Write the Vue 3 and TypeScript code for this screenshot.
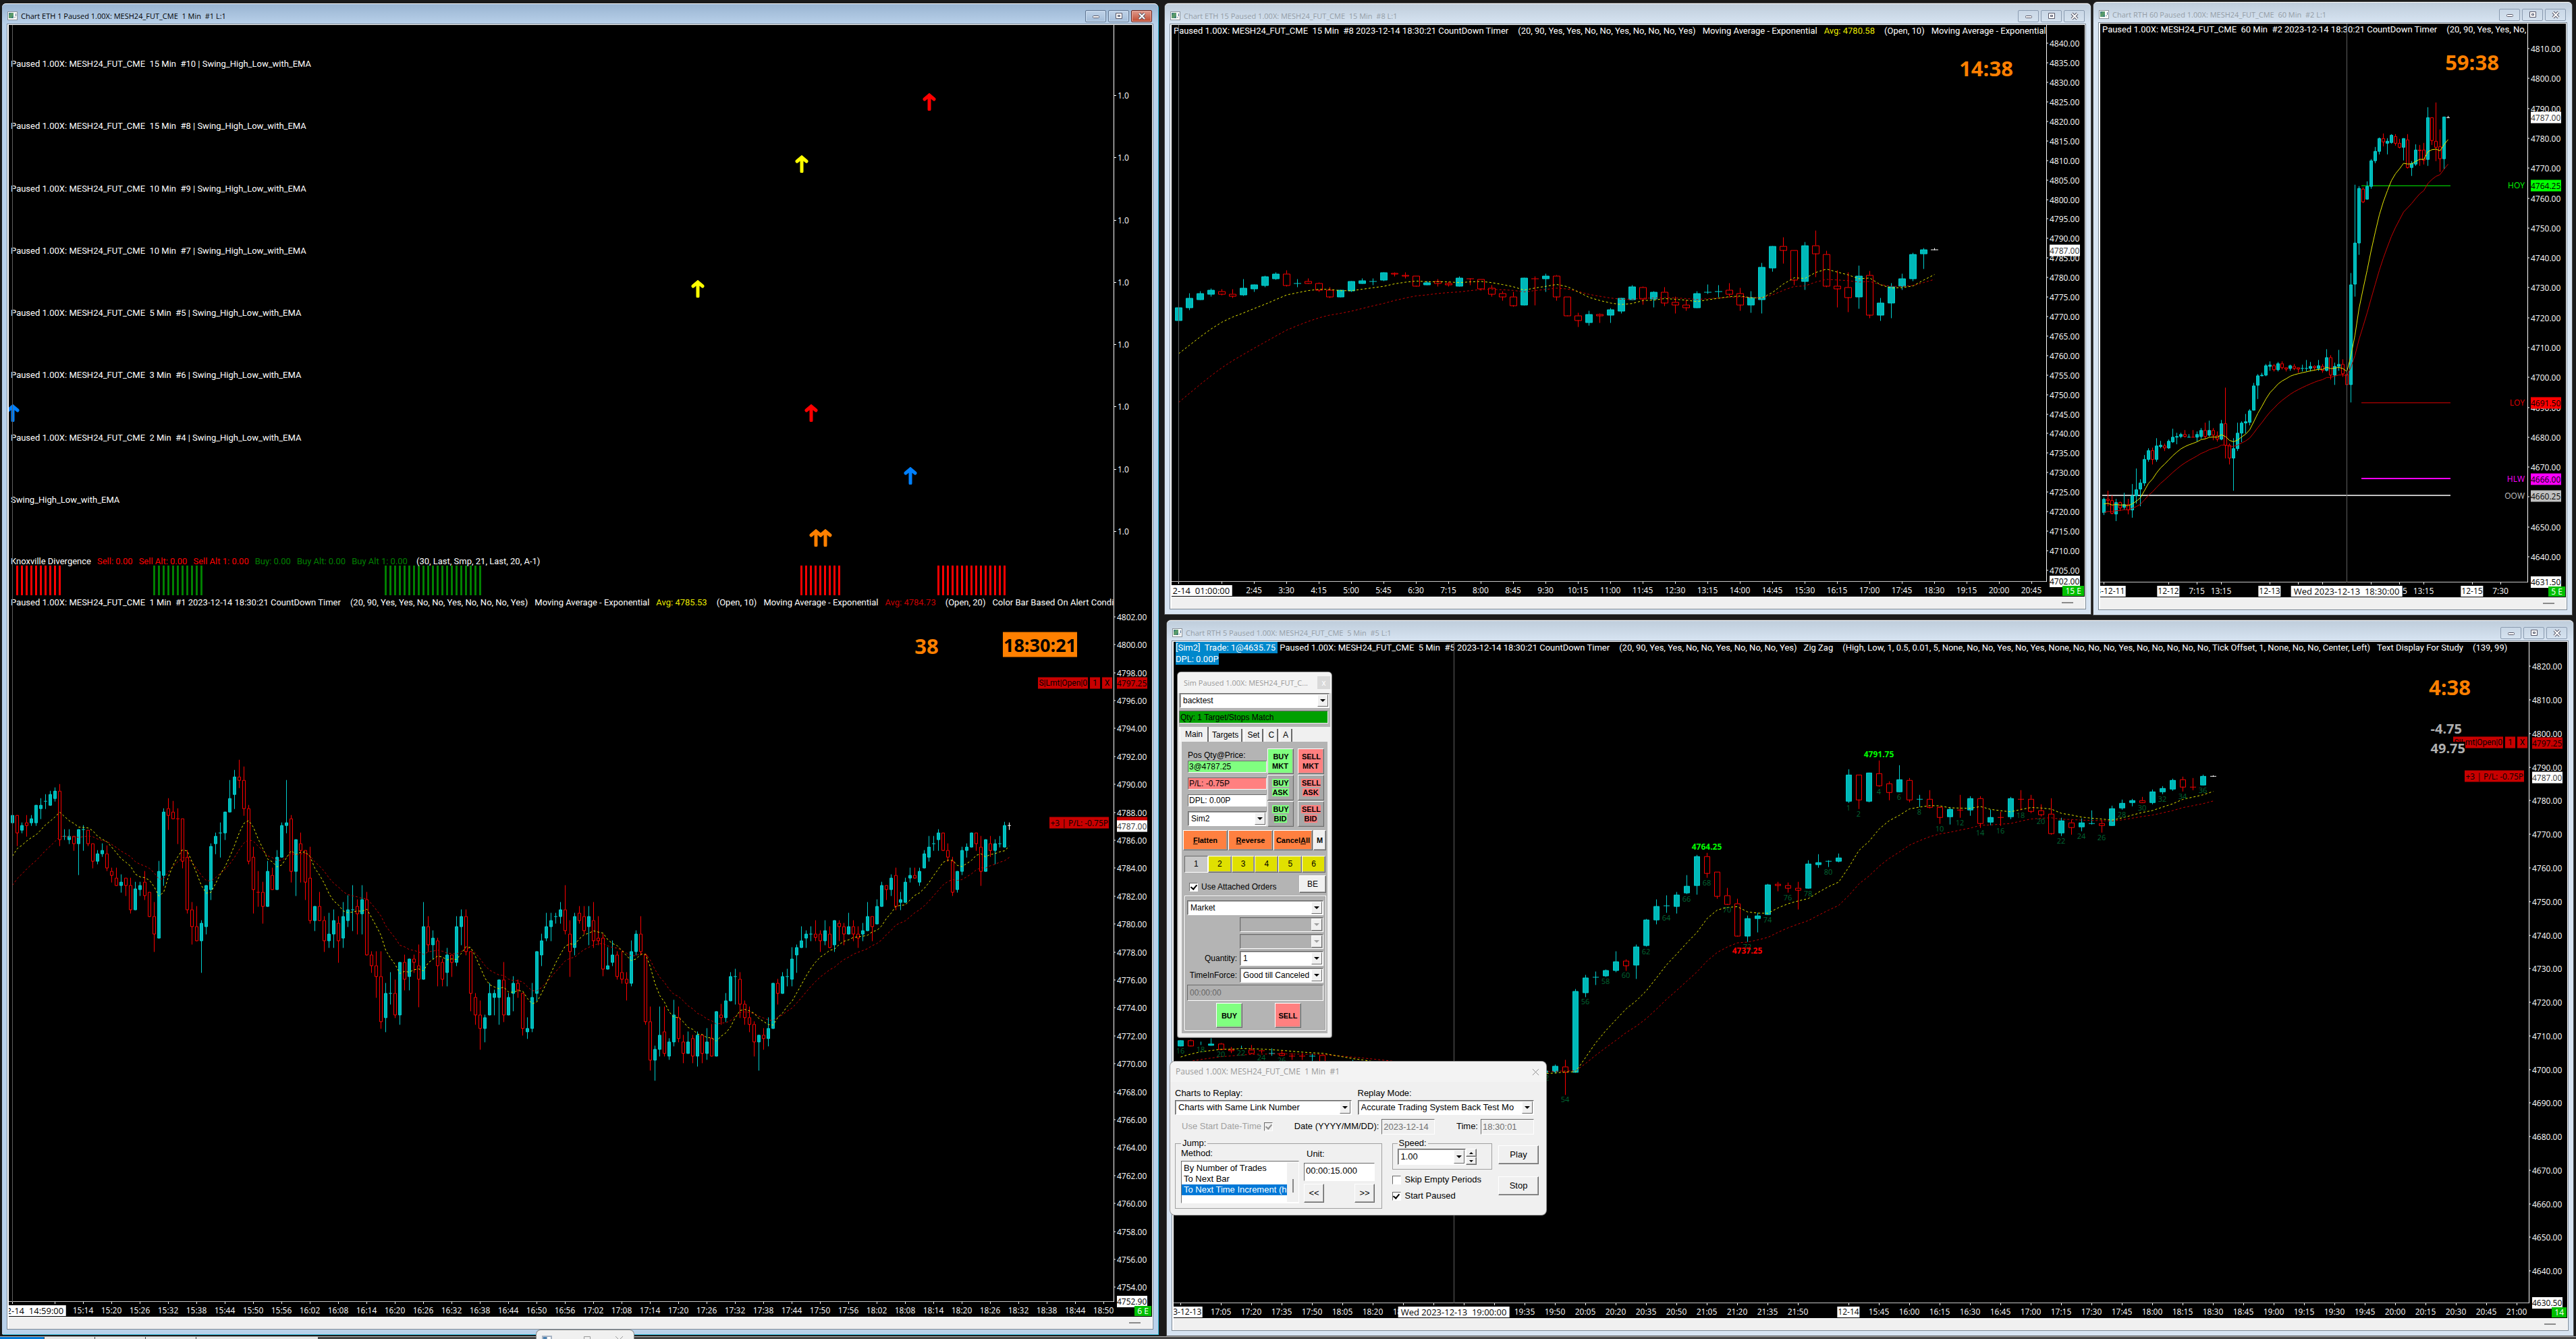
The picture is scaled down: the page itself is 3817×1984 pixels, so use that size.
<script setup lang="ts">
type Dir = 'u' | 'd' | 'w'
interface Candle { dir: Dir; hi: number; top: number; bot: number; lo: number }
interface Mark { text: string; cls: string; left: string; top: string }
interface PriceBox { text: string; price: number; cls: string }
interface TimeLabel { i: number; text: string; boxed?: boolean; long?: boolean }
interface Chart {
  id: string; title: string; active: boolean; badge: string
  w: number; h: number; x0: number; step: number; half: number
  unit: number; base: number
  refPrice: number; refY: number; perPoint: number
  prices: { from: number; to: number; by: number }
  floor: string; boxes: PriceBox[]
  candles: Candle[]; ema: { source: 'open' | 'close'; yellow: number; red: number; dash: boolean }
  ticks: number[]; times: TimeLabel[]
  cursor: number; header: { text: string; cls?: string }[]
}

// dir high top bottom low, one bar per "|"
const parse = (s: string): Candle[] => s.trim().split('|').map(r => {
  const [dir, hi, top, bot, lo] = r.trim().split(' ')
  return { dir: dir as Dir, hi: +hi, top: +top, bot: +bot, lo: +lo }
})

const oneMinute = parse(`u 425 425 440 455|d 425 425 463 491|u 440 447 457 463|d 425 440 447 470|u 425 432 440 447|u 402 402 440 447|u 387 402 410 432|u 379 394 394 410|u 371 379 402 402|u 364 371 387 393|
d 356 371 478 491|u 455 470 470 478|u 455 470 478 486|d 470 470 486 501|u 455 455 486 554|u 447 456 456 501|d 457 457 486 491|d 486 486 524 539|u 501 508 524 530|u 486 501 508 515|
d 491 508 539 546|d 539 547 555 570|d 539 562 577 577|u 554 570 577 592|d 562 562 577 600|d 562 577 631 638|u 570 585 631 631|u 570 577 586 600|d 547 570 600 608|d 592 592 646 646|
d 615 646 684 722|u 524 547 692 692|u 410 417 555 577|d 387 410 425 455|d 393 417 432 432|d 410 432 432 486|d 432 432 524 539|d 501 516 631 638|d 615 631 668 706|d 623 668 699 699|
u 654 660 699 768|u 577 577 668 684|u 486 492 586 608|u 463 470 486 508|u 440 463 463 516|u 417 417 463 478|u 348 387 417 417|u 326 341 379 410|d 303 341 348 364|d 318 348 410 425|
d 402 410 524 531|d 493 516 586 638|d 547 592 592 623|d 570 592 623 660|u 524 547 623 623|d 539 555 586 586|u 501 516 586 586|u 440 447 516 516|u 348 440 447 463|d 425 432 547 570|
u 478 478 547 600|d 463 486 501 570|d 501 501 570 608|d 493 562 654 660|u 623 623 654 677|d 592 623 654 654|d 646 654 699 722|u 638 684 699 713|u 631 654 684 713|d 646 660 699 745|
u 615 646 692 713|u 600 631 654 668|u 577 631 631 677|d 608 623 639 684|u 577 608 639 684|d 592 608 730 730|d 722 730 753 768|d 722 753 776 822|d 722 776 875 890|u 791 814 867 897|
u 768 814 814 837|d 784 814 860 866|u 745 745 860 881|d 730 745 783 806|u 738 738 776 806|d 730 738 745 768|d 707 753 783 843|u 615 668 783 783|d 646 668 707 722|u 677 692 707 738|
d 692 699 753 797|d 738 745 783 797|u 715 730 768 797|d 730 730 745 776|u 646 668 745 753|u 631 646 668 707|d 631 646 722 730|d 722 722 814 852|d 814 822 860 881|d 829 860 890 936|
u 860 867 890 920|u 791 814 860 860|u 806 814 822 860|u 784 784 822 881|d 745 784 860 875|u 814 822 860 860|u 776 791 814 852|d 784 791 806 822|d 814 814 890 905|u 867 890 898 912|
u 791 822 890 897|u 722 722 814 829|u 684 699 730 753|u 638 668 692 699|u 638 654 668 699|u 638 646 646 660|u 615 631 646 660|d 577 631 677 684|d 654 684 722 776|u 638 646 714 730|
d 623 638 654 660|d 623 646 677 684|u 623 646 668 707|d 615 654 699 713|d 646 692 699 707|d 684 692 760 775|u 713 753 761 761|u 699 730 745 753|d 722 730 776 783|d 722 768 783 791|
d 768 783 791 828|u 699 722 791 797|u 677 684 722 730|d 646 684 722 730|d 730 730 875 881|d 843 875 959 981|u 928 936 959 1004|u 843 905 936 951|d 843 898 944 951|u 912 920 951 958|
u 828 860 920 928|d 843 867 912 920|d 905 920 944 965|u 897 920 944 944|d 905 912 951 965|u 897 905 951 973|d 905 905 944 965|u 890 920 944 958|d 882 912 951 951|u 853 853 951 951|
d 837 860 867 881|u 814 829 867 875|u 768 776 829 829|u 760 776 776 837|d 768 783 837 867|d 829 837 867 881|d 843 867 882 897|d 875 882 920 951|u 905 905 920 981|d 890 905 912 936|
u 867 890 912 928|u 791 791 890 890|d 783 791 814 837|u 768 776 814 814|u 760 776 776 797|u 713 738 783 797|u 707 713 730 768|u 668 699 714 714|u 677 684 692 713|u 668 684 684 699|
d 654 684 691 699|d 677 684 699 722|u 654 677 699 707|d 668 684 714 714|u 654 654 707 722|d 654 660 668 699|d 660 668 684 707|u 638 668 684 684|d 654 668 684 699|d 668 684 692 713|
u 660 677 684 699|u 615 646 677 677|d 646 646 668 699|u 608 623 661 661|u 570 577 623 623|d 577 577 586 608|u 554 562 586 600|d 539 555 623 631|u 592 608 615 631|u 562 570 615 615|
u 539 555 562 570|d 539 555 562 562|u 539 547 570 577|u 501 508 540 540|u 470 493 516 524|u 470 486 486 501|u 455 463 478 501|d 463 463 501 501|d 486 501 516 524|d 516 524 592 600|
u 547 547 586 592|u 493 501 547 554|u 486 493 501 516|u 463 463 493 493|d 463 463 486 501|d 470 493 547 577|u 478 478 547 547|d 470 486 501 515|u 478 486 501 531|u 470 486 486 493|
u 439 447 493 493|w 440 447 447 455`)

const fifteenMinute = parse(`u 794 794 827 827|u 758 770 794 800|u 753 758 773 773|u 746 749 759 764|d 747 753 759 762|d 747 760 764 769|u 721 744 761 763|u 735 735 745 753|u 713 714 737 740|u 703 708 720 721|
d 699 708 737 739|u 721 731 731 740|d 720 727 731 731|d 730 732 750 752|d 742 749 766 769|u 749 749 766 766|u 727 727 751 752|u 720 725 731 731|u 720 726 726 735|u 704 704 723 725|
d 704 705 708 713|d 704 710 713 718|d 713 713 738 738|u 726 730 736 736|d 721 727 732 739|d 728 732 736 738|u 714 718 738 738|d 720 720 720 735|d 721 722 745 750|d 737 744 759 765|
d 753 758 767 776|d 754 767 790 791|u 718 718 788 788|d 714 720 720 788|u 707 713 720 753|d 710 713 766 776|d 767 767 816 816|d 808 816 828 843|u 803 811 832 839|d 810 812 816 832|
u 797 800 813 832|u 770 770 804 808|u 737 740 773 773|d 740 742 771 786|u 753 754 771 793|d 742 754 783 789|d 766 781 788 809|d 776 787 795 802|u 753 758 795 795|u 735 754 754 758|
u 737 753 753 766|d 732 749 760 764|d 744 758 788 802|u 753 769 788 807|u 679 690 773 809|u 636 636 692 701|d 613 636 647 679|d 646 646 723 735|u 625 634 726 748|d 596 634 655 714|
d 648 657 738 740|d 699 738 745 793|d 704 742 768 805|u 686 713 766 797|d 700 710 814 821|u 770 782 814 827|u 732 740 783 821|u 708 720 738 748|u 653 657 720 725|u 641 645 655 694|
w 641 645 645 645`)

const sixtyMinute = parse(`u 1258 1261 1295 1300|d 1240 1261 1265 1278|d 1253 1265 1297 1298|u 1262 1269 1298 1316|d 1268 1270 1283 1290|u 1246 1274 1282 1287|d 1261 1274 1289 1298|u 1224 1252 1289 1307|u 1184 1237 1252 1272|u 1211 1220 1235 1278|
u 1150 1160 1221 1227|u 1133 1139 1161 1166|d 1132 1139 1161 1172|u 1107 1126 1161 1166|u 1115 1125 1129 1131|d 1122 1127 1131 1139|u 1112 1115 1131 1134|u 1084 1104 1116 1118|u 1095 1103 1105 1122|u 1095 1098 1102 1106|
d 1087 1097 1103 1105|u 1097 1104 1104 1104|d 1088 1105 1105 1105|u 1091 1098 1104 1115|u 1082 1087 1102 1107|d 1069 1087 1102 1107|u 1064 1088 1100 1102|d 1083 1088 1100 1112|d 1090 1101 1109 1115|u 1062 1070 1109 1111|
d 980 1071 1124 1158|d 1122 1124 1157 1173|u 1108 1133 1157 1239|u 1069 1094 1133 1138|u 1066 1069 1094 1116|u 1047 1065 1069 1095|u 1035 1038 1067 1074|u 968 975 1037 1037|u 946 950 974 1007|u 942 948 950 950|
u 921 924 948 950|u 914 922 926 935|d 920 924 934 938|u 915 919 934 938|d 914 919 929 932|d 928 929 932 937|u 922 923 931 936|d 920 925 930 934|d 928 929 933 941|u 922 931 931 937|
u 910 930 930 938|u 915 926 930 937|d 923 925 928 935|u 910 924 931 935|d 921 926 935 940|u 882 904 935 938|d 899 904 948 957|u 917 925 948 971|u 885 920 926 935|d 909 920 945 951|
d 935 946 972 976|u 690 720 972 1016|u 467 614 718 749|u 470 476 614 643|d 474 478 510 512|u 458 470 503 503|u 403 406 471 476|u 372 381 405 411|u 347 349 381 388|d 337 349 358 368|
u 350 357 361 388|u 340 341 360 361|d 340 344 361 366|d 351 362 371 374|u 349 350 371 404|d 340 352 423 424|u 408 412 423 443|u 365 379 414 418|d 366 378 380 418|d 362 378 404 414|
u 271 297 403 418|d 297 297 354 364|d 259 356 371 405|d 327 369 400 433|u 294 295 400 426|w 293 296 296 296`)

const fiveMinute = parse(`u 922 922 934 934|d 921 923 935 935|u 926 926 926 932|u 919 930 933 933|d 928 930 941 941|d 938 941 944 949|u 934 934 934 939|d 933 943 950 950|d 945 945 945 949|u 940 950 950 955|
d 944 950 955 955|d 950 956 956 964|d 950 956 956 964|u 952 957 957 966|d 955 955 968 968|d 970 972 980 984|d 972 976 984 988|u 965 974 980 984|d 974 978 986 990|d 978 984 990 994|
d 980 988 996 999|d 986 992 998 999|u 990 994 999 1000|d 990 994 999 1002|u 990 995 999 1002|d 990 996 1000 1004|u 992 996 1000 1004|d 992 997 1001 1004|u 994 996 1001 1004|d 992 996 1000 1004|
u 990 995 1000 1002|d 990 995 999 1002|u 990 994 999 1002|d 988 993 998 1000|u 988 992 998 999|u 986 990 994 998|
u 985 988 991 993|u 975 978 990 993|d 965 979 991 1040|u 812 816 991 991|
u 781 787 819 828|u 774 786 786 802|u 769 771 783 784|u 730 752 771 774|d 748 750 760 771|u 715 720 759 788|u 660 661 717 718|u 618 632 662 670|u 609 631 631 645|u 602 607 632 647|
u 565 588 603 604|u 521 524 587 606|d 517 524 560 569|d 558 558 610 615|d 593 609 628 628|d 616 626 696 696|u 653 658 696 708|u 647 653 659 688|u 584 585 649 650|d 580 584 587 599|
d 581 587 593 602|d 580 593 597 638|u 533 540 593 593|u 520 537 541 547|u 533 535 535 546|u 518 527 535 536|u 336 347 404 408|d 347 347 402 421|u 343 343 404 406|d 317 344 371 372|
d 362 366 385 402|u 327 358 384 384|d 355 359 402 406|u 391 400 400 416|d 381 400 418 419|d 416 418 439 453|u 418 422 438 454|d 391 423 423 440|u 394 399 423 435|d 394 399 452 461|
u 423 439 450 455|d 428 439 439 457|u 396 399 438 443|d 381 400 400 423|d 391 400 426 429|d 411 425 433 436|d 399 432 474 476|u 441 447 473 479|d 445 451 461 476|u 443 451 460 469|
u 425 452 452 454|d 446 452 457 472|u 415 420 457 457|u 401 409 419 422|u 400 403 408 415|d 396 403 407 408|u 380 384 407 410|u 373 377 384 389|u 356 359 378 381|d 352 358 374 383|
d 355 374 374 380|u 348 350 369 369|w 349 351 351 351`)

const clock = (minutes: number) => `${Math.floor(minutes / 60)}:${String(minutes % 60).padStart(2, '0')}`
const run = (first: number, last: number, by: number, start: number, per: number) => {
  const out: TimeLabel[] = []
  for (let i = first; i <= last; i += by) out.push({ i, text: clock(start + (i - first) * per) })
  return out
}
const every = (first: number, last: number, by: number) => {
  const out: number[] = []
  for (let i = first; i <= last; i += by) out.push(i)
  return out
}

const timer = '(20, 90, Yes, Yes, No, No, Yes, No, No, No, Yes)'
const ema = 'Moving Average - Exponential'

const charts: Chart[] = [
  {
    id: 'eth1', title: 'Chart ETH 1 Paused 1.00X: MESH24_FUT_CME  1 Min  #1 L:1', active: true, badge: '6 E',
    w: 1637, h: 1045, x0: 5, step: 7, half: 2, unit: 1.4737, base: 36,
    refPrice: 4800, refY: 71.3, perPoint: 20.696, prices: { from: 4802, to: 4754, by: 2 }, floor: '4752.90',
    boxes: [{ text: '4797.25', price: 4797.25, cls: 'order' }, { text: '', price: 4787.25, cls: 'order' }, { text: '4787.00', price: 4787, cls: 'last' }],
    candles: oneMinute, ema: { source: 'open', yellow: 514, red: 578, dash: true },
    ticks: [0, 9, ...every(15, 231, 6)],
    times: [...run(15, 231, 6, 914, 1), { i: 0, text: 'Thu 2023-12-14  14:59:00', boxed: true, long: true }],
    cursor: 0,
    header: [{ text: 'Paused 1.00X: MESH24_FUT_CME  1 Min  #1 2023-12-14 18:30:21 CountDown Timer' }, { text: timer }, { text: ema, cls: 'tight' }, { text: 'Avg: 4785.53', cls: 'yellow tight' }, { text: '(Open, 10)' }, { text: ema, cls: 'tight' }, { text: 'Avg: 4784.73', cls: 'red tight' }, { text: '(Open, 20)' }, { text: 'Color Bar Based On Alert Condition', cls: 'tight' }],
  },
  {
    id: 'eth15', title: 'Chart ETH 15 Paused 1.00X: MESH24_FUT_CME  15 Min  #8 L:1', active: false, badge: '15 E',
    w: 1296, h: 825, x0: 10, step: 16, half: 5, unit: 1.7422, base: -37,
    refPrice: 4840, refY: 27.3, perPoint: 5.782, prices: { from: 4840, to: 4705, by: 5 }, floor: '4702.00',
    boxes: [{ text: '4787.00', price: 4787, cls: 'last' }],
    candles: fifteenMinute, ema: { source: 'open', yellow: 914, red: 1040, dash: true },
    ticks: [0, 4, ...every(7, 79, 3)],
    times: [...run(7, 79, 3, 165, 15), { i: 0, text: 'Thu 2023-12-14  01:00:00', boxed: true, long: true }],
    cursor: 0,
    header: [{ text: 'Paused 1.00X: MESH24_FUT_CME  15 Min  #8 2023-12-14 18:30:21 CountDown Timer' }, { text: timer }, { text: ema, cls: 'tight' }, { text: 'Avg: 4780.58', cls: 'yellow tight' }, { text: '(Open, 10)' }, { text: ema, cls: 'tight' }],
  },
  {
    id: 'rth60', title: 'Chart RTH 60 Paused 1.00X: MESH24_FUT_CME  60 Min  #2 L:1', active: false, badge: '5 E',
    w: 633, h: 828, x0: 5, step: 6, half: 2, unit: 1.7043, base: -35,
    refPrice: 4810, refY: 37.2, perPoint: 4.428, prices: { from: 4810, to: 4640, by: 10 }, floor: '4631.50',
    boxes: [{ text: '4787.00', price: 4787, cls: 'last' }, { text: '4764.25', price: 4764.25, cls: 'hoy' }, { text: '4691.50', price: 4691.5, cls: 'loy' }, { text: '4666.00', price: 4666, cls: 'hlw' }, { text: '4660.25', price: 4660.25, cls: 'oow' }],
    candles: sixtyMinute, ema: { source: 'close', yellow: 1274, red: 1296, dash: false },
    ticks: [0, 16, 23, 29, 41, 48, 54, 66, 73, 79, 91, 98],
    times: [{ i: 23, text: '7:15' }, { i: 29, text: '13:15' }, { i: 73, text: '7:15' }, { i: 79, text: '13:15' }, { i: 98, text: '7:30' }, { i: 0, text: '2023-12-11', boxed: true }, { i: 16, text: '12-12', boxed: true }, { i: 41, text: '12-13', boxed: true }, { i: 91, text: '12-15', boxed: true }, { i: 60, text: 'Wed 2023-12-13  18:30:00', boxed: true, long: true }],
    cursor: 60,
    header: [{ text: 'Paused 1.00X: MESH24_FUT_CME  60 Min  #2 2023-12-14 18:30:21 CountDown Timer' }, { text: '(20, 90, Yes, Yes, No,' }],
  },
  {
    id: 'rth5', title: 'Chart RTH 5 Paused 1.00X: MESH24_FUT_CME  5 Min  #5 L:1', active: false, badge: '14',
    w: 2008, h: 980, x0: 10, step: 15, half: 4, unit: 1.46, base: -41,
    refPrice: 4820, refY: 36.4, perPoint: 4.977, prices: { from: 4820, to: 4640, by: 10 }, floor: '4630.50',
    boxes: [{ text: '4797.25', price: 4797.25, cls: 'order' }, { text: '4787.00', price: 4787, cls: 'last' }],
    candles: fiveMinute, ema: { source: 'open', yellow: 959, red: 973, dash: true },
    ticks: [0, ...every(4, 61, 3), ...every(66, 132, 3)],
    times: [...run(4, 22, 3, 1025, 5), ...run(34, 61, 3, 1175, 5), ...run(69, 132, 3, 945, 5), { i: 0, text: '2023-12-13', boxed: true }, { i: 66, text: '12-14', boxed: true }, { i: 27, text: 'Wed 2023-12-13  19:00:00', boxed: true, long: true }],
    cursor: 27,
    header: [{ text: '[Sim2]  Trade: 1@4635.75 ', cls: 'sim' }, { text: 'Paused 1.00X: MESH24_FUT_CME  5 Min  #5 2023-12-14 18:30:21 CountDown Timer', cls: 'joined' }, { text: timer }, { text: 'Zig Zag', cls: 'tight' }, { text: '(High, Low, 1, 0.5, 0.01, 5, None, No, No, Yes, No, Yes, None, No, No, No, Yes, No, No, No, No, No, Tick Offset, 1, None, No, No, Center, Left)' }, { text: 'Text Display For Study', cls: 'tight' }, { text: '(139, 99)' }],
  },
]

const barX = (c: Chart, i: number) => c.x0 + c.step * i
const levelY = (c: Chart, u: number) => Math.round(u / c.unit + c.base)
const priceY = (c: Chart, p: number) => c.refY + (c.refPrice - p) * c.perPoint
const pctX = (c: Chart, x: number) => `${(x / c.w) * 100}%`
const pctY = (c: Chart, y: number) => `${(y / c.h) * 100}%`

function shapes(c: Chart) {
  let upWick = '', upBody = '', downWick = '', downBody = '', live = ''
  c.candles.forEach((k, i) => {
    const x = barX(c, i), hi = levelY(c, k.hi), top = levelY(c, k.top), bot = levelY(c, k.bot), lo = levelY(c, k.lo)
    const left = x - c.half + 0.5, width = c.half * 2, height = Math.max(bot - top, 0)
    const cross = `M${x + 0.5} ${hi}V${lo + 1}`
    const bar = `M${left - 0.5} ${top + 0.5}h${width + 1}`
    if (k.dir === 'w') live += cross + bar
    else if (k.dir === 'u') {
      upWick += cross
      if (height < 1) upWick += k.top === k.hi && k.lo - k.hi < 8 ? '' : bar
      else upBody += `M${left} ${top + 0.5}h${width}v${height}h${-width}z`
    } else {
      downWick += `M${x + 0.5} ${hi}V${top}M${x + 0.5} ${bot}V${lo + 1}`
      if (height < 1) downWick += bar
      else downBody += `M${left} ${top + 0.5}h${width}v${height}h${-width}z`
    }
  })
  return { upWick, upBody, downWick, downBody, live }
}

function average(c: Chart, period: number, start: number) {
  const a = 2 / (period + 1)
  let e = start
  return c.candles.map((k, i) => {
    const rising = k.dir !== 'd'
    const open = rising ? k.bot : k.top, close = rising ? k.top : k.bot
    if (i) e += a * ((c.ema.source === 'open' ? open : close) - e)
    return `${barX(c, i) + 0.5},${(e / c.unit + c.base).toFixed(1)}`
  }).join(' ')
}

const views = charts.map(c => {
  const prices: number[] = []
  for (let p = c.prices.from; p >= c.prices.to; p -= c.prices.by) prices.push(p)
  return { c, prices, s: shapes(c), yellow: average(c, 10, c.ema.yellow), red: average(c, 20, c.ema.red) }
})

const studies = [
  { name: 'Paused 1.00X: MESH24_FUT_CME  15 Min  #10 | Swing_High_Low_with_EMA', arrows: [{ i: 194, cls: 'a-red' }] },
  { name: 'Paused 1.00X: MESH24_FUT_CME  15 Min  #8 | Swing_High_Low_with_EMA', arrows: [{ i: 167, cls: 'a-yellow' }] },
  { name: 'Paused 1.00X: MESH24_FUT_CME  10 Min  #9 | Swing_High_Low_with_EMA', arrows: [] },
  { name: 'Paused 1.00X: MESH24_FUT_CME  10 Min  #7 | Swing_High_Low_with_EMA', arrows: [{ i: 145, cls: 'a-yellow' }] },
  { name: 'Paused 1.00X: MESH24_FUT_CME  5 Min  #5 | Swing_High_Low_with_EMA', arrows: [] },
  { name: 'Paused 1.00X: MESH24_FUT_CME  3 Min  #6 | Swing_High_Low_with_EMA', arrows: [{ i: 0, cls: 'a-blue' }, { i: 169, cls: 'a-red' }] },
  { name: 'Paused 1.00X: MESH24_FUT_CME  2 Min  #4 | Swing_High_Low_with_EMA', arrows: [{ i: 190, cls: 'a-blue' }] },
  { name: 'Swing_High_Low_with_EMA', arrows: [{ i: 170, cls: 'a-orange' }, { i: 172, cls: 'a-orange' }] },
]
const bars = [
  ...every(1, 10, 1).map(i => ({ i, fill: '#f00' })), ...every(30, 40, 1).map(i => ({ i, fill: '#008000' })),
  ...every(79, 99, 1).map(i => ({ i, fill: '#008000' })), ...every(167, 175, 1).map(i => ({ i, fill: '#f00' })),
  ...every(196, 210, 1).map(i => ({ i, fill: '#f00' })),
]

const at = (c: Chart, x: number, y: number) => ({ left: pctX(c, x), top: pctY(c, y) })
const mark = (n: number, text: string, cls: string, x: number, y: number): Mark => ({ text, cls, ...at(charts[n], x, y) })
const marks: Record<string, Mark[]> = {
  eth1: [mark(0, '38', 'count', 1360, 73), mark(0, '18:30:21', 'clock', 1528, 71)],
  eth15: [mark(1, '14:38', 'count', 1207, 64)],
  rth60: [mark(2, '59:38', 'count', 551, 57)],
  rth5: [mark(3, '4:38', 'count', 1891, 67), mark(3, '4791.75', 'swing up', 1045, 166), mark(3, '4764.25', 'swing up', 790, 303), mark(3, '4737.25', 'swing down', 850, 457)],
}
const barNumbers = fiveMinute.map((k, i) => ({ n: i < 66 ? i + 16 : i - 65, i, y: levelY(charts[3], k.lo) + 8 })).filter(b => b.i < 102 && (b.n % 2 === 0 || b.n === 1))
const levels = [
  { name: 'HOY', price: 4764.25, color: '#0f0', from: 387, width: 1 }, { name: 'LOY', price: 4691.5, color: '#e00000', from: 387, width: 1 },
  { name: 'HLW', price: 4666, color: '#f0f', from: 387, width: 2 }, { name: 'OOW', price: 4660.25, color: '#c0c0c0', from: 3, width: 2 },
]
const tabs = ['Main', 'Targets', 'Set', 'C', 'A']
const replayTitle = 'Paused 1.00X: MESH24_FUT_CME  1 Min  #1'
</script>

<template>
  <main class="desktop">
    <div class="taskbar"><i></i><i></i><i></i><i></i><i></i></div>
    <section v-for="v in views" :key="v.c.id" class="win" :class="[v.c.id, { active: v.c.active }]">
      <header class="titlebar">
        <svg class="appicon" viewBox="0 0 15 13" aria-hidden="true">
          <rect width="15" height="13" fill="#8a9299" /><rect x="1" y="1" width="13" height="11" fill="#fff" />
          <rect x="2" y="2" width="7" height="8" fill="#3d7f7a" /><path d="M2 10V6l4-4h3v4l-4 4z" fill="#5a9a6a" /><rect x="12" y="3" width="1" height="4" fill="#4a6a90" /><rect x="10" y="8" width="2" height="1" fill="#888" />
        </svg>
        <h2>{{ v.c.title }}</h2>
        <div class="buttons">
          <button aria-label="Minimize"><svg viewBox="0 0 16 12"><rect x="3.5" y="5.5" width="9" height="3" rx="1" fill="#fff" stroke="#556" /></svg></button>
          <button aria-label="Restore"><svg viewBox="0 0 16 12"><path d="M3.5 1.5h9v8h-9zM6.5 4.5h3v2h-3z" fill="#fff" fill-rule="evenodd" stroke="#556" /></svg></button>
          <button class="close" aria-label="Close"><svg viewBox="0 0 16 12"><path d="M4 2l8 8M12 2l-8 8" stroke="#556" stroke-width="4" /><path d="M4 2l8 8M12 2l-8 8" stroke="#fff" stroke-width="2" /></svg></button>
        </div>
      </header>
      <div class="client">
        <div class="stack">
          <template v-if="v.c.id === 'eth1'">
            <div class="lead"></div><div class="axis"></div>
            <template v-for="s in studies" :key="s.name">
              <div class="study">
                <svg v-for="a in s.arrows" :key="a.i" class="arrow" :class="a.cls" :style="{ left: pctX(v.c, barX(v.c, a.i)) }" viewBox="0 0 20 26" aria-hidden="true"><path d="M10 24V4M3 9l7-6 7 6" /></svg>
                <p class="line">{{ s.name }}</p>
              </div>
              <div class="axis"><span class="one">1.0</span></div>
            </template>
            <div class="study">
              <svg class="bars" viewBox="0 0 1637 44" preserveAspectRatio="none" shape-rendering="crispEdges" aria-hidden="true"><rect v-for="b in bars" :key="b.i" :x="barX(v.c, b.i) - 1" y="0" width="3" height="44" :fill="b.fill" /></svg>
              <p class="line knox"><span>Knoxville Divergence</span><span class="r2">Sell: 0.00</span><span class="r2">Sell Alt: 0.00</span><span class="r2">Sell Alt 1: 0.00</span><span class="g2">Buy: 0.00</span><span class="g2">Buy Alt: 0.00</span><span class="g2">Buy Alt 1: 0.00</span><span class="wide">(30, Last, Smp, 21, Last, 20, A-1)</span></p>
            </div>
            <div class="axis"></div>
          </template>

          <div class="plot">
            <svg class="graph" :viewBox="`0 0 ${v.c.w} ${v.c.h}`" preserveAspectRatio="none" fill="none" role="img" :aria-label="v.c.title">
              <g shape-rendering="crispEdges">
                <g v-if="v.c.id === 'rth60'"><path v-for="l in levels" :key="l.name" :d="`M${l.from} ${Math.round(priceY(v.c, l.price)) + (l.width === 1 ? 0.5 : 0)}H519`" :stroke="l.color" :stroke-width="l.width" /></g>
                <path :d="v.s.upWick" stroke="#00d0d0" />
                <path :d="v.s.upBody" fill="#00b8b8" stroke="#00d0d0" />
                <path :d="v.s.downWick + v.s.downBody" stroke="#f00" />
                <path :d="v.s.live" stroke="#fff" />
              </g>
              <polyline :points="v.red" stroke="#c80000" :stroke-dasharray="v.c.ema.dash ? '3 3' : undefined" />
              <polyline :points="v.yellow" stroke="#e8e800" :stroke-dasharray="v.c.ema.dash ? '3 3' : undefined" />
            </svg>
            <p class="line head"><span v-for="(h, n) in v.c.header" :key="n" :class="h.cls">{{ h.text }}</span></p>
            <p v-if="v.c.id === 'rth5'" class="line dpl"><span class="sim">DPL: 0.00P</span></p>
            <template v-if="v.c.id === 'rth5'">
              <span v-for="b in barNumbers" :key="b.i" class="num" :style="at(v.c, barX(v.c, b.i), b.y)">{{ b.n }}</span>
            </template>
            <template v-if="v.c.id === 'rth60'">
              <span v-for="l in levels" :key="l.name" class="level" :style="{ top: pctY(v.c, priceY(v.c, l.price)), color: l.color }">{{ l.name }}</span>
            </template>
            <template v-if="v.c.id === 'eth1' || v.c.id === 'rth5'">
              <div class="tags" :style="{ top: pctY(v.c, priceY(v.c, 4797.25)) }"><span>S|Lmt|Open|0</span><button>1</button><button aria-label="Cancel order">X</button></div>
              <div class="tags pl" :style="{ top: pctY(v.c, priceY(v.c, 4787.25)) }"><span>+3 | P/L: -0.75P</span></div>
            </template>
            <div v-if="v.c.id === 'rth5'" class="stats"><span>-4.75</span><span>49.75</span></div>
            <span v-for="m in marks[v.c.id]" :key="m.text" :class="m.cls" :style="{ left: m.left, top: m.top }">{{ m.text }}</span>
          </div>
          <div class="axis prices">
            <span v-for="p in v.prices" :key="p" class="price" :style="{ top: pctY(v.c, priceY(v.c, p)) }">{{ p.toFixed(2) }}</span>
            <span v-for="b in v.c.boxes" :key="b.price" class="price box" :class="b.cls" :style="{ top: pctY(v.c, priceY(v.c, b.price)) }">{{ b.text }}</span>
            <span class="price box floor">{{ v.c.floor }}</span>
          </div>
          <div class="cursor" :style="{ left: `calc((100% - 57px) * ${barX(v.c, v.c.cursor) / v.c.w})` }"></div>
        </div>
        <div class="timebar">
          <div class="times">
            <i v-for="t in v.c.ticks" :key="t" :style="{ left: pctX(v.c, barX(v.c, t)) }"></i>
            <span v-for="t in v.c.times" :key="t.i" :class="{ boxed: t.boxed, long: t.long }" :style="{ left: pctX(v.c, barX(v.c, t.i)) }">{{ t.text }}</span>
          </div>
          <b class="badge">{{ v.c.badge }}</b>
        </div>
        <footer class="status"><i></i></footer>
      </div>

      <template v-if="v.c.id === 'rth5'">
        <form class="trade" @submit.prevent>
          <header><h3>Sim Paused 1.00X: MESH24_FUT_C...</h3><button aria-label="Close panel">x</button></header>
          <div class="combo"><select aria-label="Configuration"><option>backtest</option></select><span class="drop"></span></div>
          <output class="match">Qty: 1 Target/Stops Match</output>
          <nav class="tabs"><button v-for="(t, n) in tabs" :key="t" type="button" :class="{ on: n === 0 }">{{ t }}</button></nav>
          <div class="page">
            <div class="position">
              <div class="fields">
                <label for="pos">Pos Qty@Price:</label>
                <input id="pos" class="green" value="3@4787.25" readonly>
                <input class="pink" aria-label="Open profit" value="P/L: -0.75P" readonly>
                <input aria-label="Daily profit" value="DPL: 0.00P" readonly>
                <div class="combo"><select aria-label="Account"><option>Sim2</option></select><span class="drop"></span></div>
              </div>
              <div class="orders">
                <button class="buy full"><span>BUY<br>MKT</span></button><button class="sell full"><span>SELL<br>MKT</span></button>
                <button class="buy"><span>BUY<br>ASK</span></button><button class="sell"><span>SELL<br>ASK</span></button>
                <button class="buy"><span>BUY<br>BID</span></button><button class="sell"><span>SELL<br>BID</span></button>
              </div>
            </div>
            <div class="actions"><button class="w1"><u>F</u>latten</button><button class="w2"><u>R</u>everse</button><button class="w3">Cancel<u>A</u>ll</button><button class="m">M</button></div>
            <div class="qty"><button v-for="q in 6" :key="q" :class="{ on: q === 1 }">{{ q }}</button></div>
            <div class="attach"><label><input type="checkbox" checked><span>Use Attached Orders</span></label><button>BE</button></div>
            <fieldset class="ticket">
              <div class="combo"><select aria-label="Order type"><option>Market</option></select><span class="drop"></span></div>
              <div class="combo off"><select aria-label="Price 1" disabled><option></option></select><span class="drop"></span></div>
              <div class="combo off"><select aria-label="Price 2" disabled><option></option></select><span class="drop"></span></div>
              <div class="pair q"><label for="qty">Quantity:</label><div class="combo"><select id="qty"><option>1</option></select><span class="drop"></span></div></div>
              <div class="pair t"><label for="tif">TimeInForce:</label><div class="combo"><select id="tif"><option>Good till Canceled</option></select><span class="drop"></span></div></div>
              <input class="gtd" aria-label="Good till time" value="00:00:00" disabled>
              <div class="send"><button class="buy full"><span>BUY</span></button><button class="sell full"><span>SELL</span></button></div>
            </fieldset>
          </div>
        </form>

        <form class="replay" @submit.prevent>
          <header><h3>{{ replayTitle }}</h3><button aria-label="Close replay"><svg viewBox="0 0 12 12"><path d="M1 1l10 10M11 1L1 11" stroke="#888" fill="none" /></svg></button></header>
          <div class="sources">
            <div><label for="ctr">Charts to Replay:</label><div class="combo"><select id="ctr"><option>Charts with Same Link Number</option></select><span class="drop"></span></div></div>
            <div><label for="mode">Replay Mode:</label><div class="combo"><select id="mode"><option>Accurate Trading System Back Test Mo</option></select><span class="drop"></span></div></div>
          </div>
          <div class="start">
            <label class="muted"><span>Use Start Date-Time</span><input type="checkbox" checked disabled></label>
            <label class="date"><span>Date (YYYY/MM/DD):</span><input value="2023-12-14" disabled></label>
            <label class="time"><span>Time:</span><input value="18:30:01" disabled></label>
          </div>
          <div class="lower">
            <fieldset class="jump">
              <legend>Jump:</legend>
              <div class="method"><label for="method">Method:</label>
                <div class="list"><select id="method" size="3"><option>By Number of Trades</option><option>To Next Bar</option><option class="sel">To Next Time Increment (hh:mm:ss)</option></select><span class="thumb"></span></div>
              </div>
              <div class="unit"><label for="unit">Unit:</label><input id="unit" value="00:00:15.000"><div><button>&lt;&lt;</button><button>&gt;&gt;</button></div></div>
            </fieldset>
            <div class="middle">
              <fieldset class="speed"><legend>Speed:</legend><div class="combo"><select aria-label="Speed"><option>1.00</option></select><span class="drop"></span></div><div class="spin"><button class="up" aria-label="Faster"></button><button aria-label="Slower"></button></div></fieldset>
              <label><input type="checkbox"><span>Skip Empty Periods</span></label>
              <label><input type="checkbox" checked><span>Start Paused</span></label>
            </div>
            <div class="go"><button>Play</button><button>Stop</button></div>
          </div>
        </form>
      </template>
    </section>
    <div class="stub"><svg viewBox="0 0 128 13" aria-hidden="true"><path d="M0 8h15v5H0z" fill="#a8b4c4" /><path d="M2 10h5v3H2z" fill="#4a80b0" /><path d="M8 10h5v3H8z" fill="#fff" /><path d="M62.5 13V9.5h9V13M109 9l4 4M120 9l-4 4" stroke="#999" fill="none" /></svg></div>
  </main>
</template>

<style>
body { background: #1a1a1a; }
</style>

<style scoped>
* { box-sizing: border-box; }
h2, h3, p { margin: 0; font-weight: 400; }
button, input, select { font: inherit; color: inherit; padding: 0; margin: 0; border-radius: 0; }
i, b { font-style: normal; font-weight: 400; }
.desktop {
  position: relative; height: 100vh; overflow: hidden; background: #1a1a1a;
  display: grid;
  grid-template-columns: 3px minmax(0, 1713fr) 10px 3px minmax(0, 1369fr) 4px minmax(0, 709fr) 2px 4px;
  grid-template-rows: 3px 2px minmax(0, 905fr) 1px 8px minmax(0, 1058fr) 2px 5px;
  font: 12px/17px "Open Sans", "Noto Sans", sans-serif; white-space: pre;
}
.win {
  --frame: #d7e4f2; --top: #bfcddb;
  position: relative; min-width: 0; min-height: 0; display: flex; flex-direction: column;
  background: var(--frame); border-radius: 6px 6px 0 0; padding: 0 8px 8px; box-shadow: 0 0 0 1px #4a4a4a;
}
.win.active { --frame: #b9d1ea; --top: #99b4d1; box-shadow: 1px 1px 0 0 #30b8d8; }
.eth1 { grid-area: 3 / 2 / 7 / 3; }
.eth15 { grid-area: 3 / 4 / 4 / 6; }
.rth60 { grid-area: 2 / 7 / 5 / 8; }
.rth5 { grid-area: 6 / 5 / 8 / 9; }
.titlebar {
  height: 31px; flex: none; margin: 0 -8px; padding: 5px 9px 0 8px; display: flex; align-items: center; gap: 5px;
  background: linear-gradient(var(--top), var(--frame)); border-top: 1px solid #fff; border-radius: 6px 6px 0 0;
}
.appicon { width: 15px; height: 13px; }
.titlebar h2 { flex: 1; min-width: 0; overflow: hidden; font-size: 11px; line-height: 17px; color: #949da6; }
.active .titlebar h2 { color: #000; }
.buttons { display: flex; gap: 3px; }
.buttons button { width: 31px; height: 18px; border: 1px solid #8a9bb0; border-radius: 2px; background: linear-gradient(#c9d7e6, #d5e2ef); display: grid; place-items: center; }
.active .buttons button { background: linear-gradient(#c0d3e8, #a3bdd9); border-color: #5e7490; box-shadow: inset 0 0 0 1px #cfe0f2; }
.buttons svg { width: 16px; height: 12px; fill: none; }
.active .buttons .close { background: linear-gradient(#e09a8c, #c04a30); border-color: #6a2018; box-shadow: inset 0 0 0 1px #e8b0a4; }
.client { flex: 1; min-height: 0; display: flex; flex-direction: column; border: 1px solid #fff; border-left: 2px solid #fff; border-bottom: 0; border-right: 1px solid #fff; background: #000; color: #fff; box-shadow: 0 0 0 1px #7c8894; }
.stack { position: relative; flex: 1; min-height: 0; display: grid; grid-template-columns: minmax(0, 1fr) 57px; grid-template-rows: minmax(0, 1fr); overflow: visible; }
.eth1 .stack { grid-template-rows: minmax(0, 196fr) repeat(8, minmax(0, 369fr)) minmax(0, 240fr) minmax(0, 4180fr); }
.axis { border-left: 1px solid #fff; position: relative; }
.study { position: relative; overflow: hidden; }
.line { position: relative; padding-left: 3px; font-family: Roboto, "Open Sans", sans-serif; font-size: 13px; height: 17px; line-height: 17px; overflow: hidden; }
.one { position: absolute; left: 5px; top: 47px; }
.one::before, .price:not(.box)::before { content: ""; position: absolute; left: -5px; top: 8px; width: 3px; height: 1px; background: #fff; }
.arrow { position: absolute; top: 52px; width: 20px; height: 26px; margin-left: -9px; fill: none; stroke-width: 5; stroke-linecap: round; }
.a-red { stroke: #f00; }
.a-yellow { stroke: #ff0; }
.a-blue { stroke: #0080ff; }
.a-orange { stroke: #ff8000; }
.bars { position: absolute; left: 0; top: 14px; width: 100%; height: 44px; }
.knox { display: flex; gap: 9px; line-height: 15px; }
.knox .wide { margin-left: 4px; }
.r2 { color: #f00; }
.g2 { color: #008000; }
.plot { position: relative; overflow: hidden; border-bottom: 1px solid #c8c8c8; }
.graph { position: absolute; inset: 0; width: 100%; height: 100%; }
.head { display: flex; }
.head span { flex: none; margin-left: 14px; }
.head span:first-child { margin-left: 0; }
.head .tight { margin-left: 10px; }
.head .joined { margin-left: 3px; }
.yellow { color: #e8e800; }
.red { color: #c80000; }
.sim { background: #0088cc; display: inline-block; }
.count, .clock, .num, .swing { position: absolute; transform: translate(-50%, -50%); }
.count { font-size: 31px; line-height: 38px; font-weight: 700; color: #ff8000; }
.clock { font-size: 27px; line-height: 37px; font-weight: 700; color: #000; background: #ff8000; padding: 0 1px; }
.num { font-size: 11px; line-height: 14px; color: #006633; }
.swing { font-weight: 700; }
.up.swing { color: #0f0; }
.down.swing { color: #f00; }
.level { position: absolute; right: 4px; transform: translateY(-50%); }
.tags { position: absolute; right: 2px; transform: translateY(-50%); display: flex; gap: 3px; color: #000; font-family: Roboto, "Open Sans", sans-serif; }
.tags > * { background: #c80000; border: 0; height: 17px; line-height: 17px; padding: 0 1px; }
.tags button { width: 15px; padding: 0; }
.tags.pl { right: 7px; font-family: "Open Sans", "Noto Sans", sans-serif; }
.stats { position: absolute; right: 94px; top: 119px; display: flex; flex-direction: column; font-size: 20px; line-height: 20px; gap: 9px; font-weight: 700; color: #b0b0b0; }
.stats span { background: #000; }
.price { position: absolute; left: 4px; transform: translateY(-50%); }
.box { height: 17px; width: 45px; }
.last, .floor { background: #fff; color: #333; }
.floor { bottom: -8px; transform: none; color: #000; }
.order { background: #c80000; color: #000; }
.hoy { background: #0f0; color: #000; }
.loy { background: #f00; color: #000; }
.hlw { background: #f0f; color: #000; }
.oow { background: #c0c0c0; color: #000; }
.cursor { position: absolute; top: 0; bottom: 0; width: 1px; background: #606060; }
.timebar { height: 22px; flex: none; display: flex; justify-content: space-between; }
.times { position: relative; flex: none; width: calc(100% - 57px); overflow: hidden; }
.times i { position: absolute; top: 0; width: 1px; height: 3px; background: #fff; }
.times span { position: absolute; top: 5px; transform: translateX(-50%); line-height: 16px; }
.times .boxed { background: #fff; color: #000; padding: 0 1px; }
.times .long { font-size: 13px; padding: 0 4px; }
.badge { align-self: flex-end; margin: 0 1px 1px 0; background: #00c000; height: 15px; line-height: 15px; padding: 0 4px; position: relative; }
.status { height: 18px; flex: none; background: #f0f0f0; display: flex; justify-content: flex-end; align-items: center; padding-right: 17px; }
.status i { width: 17px; height: 2px; background: #8a8a8a; }

.trade, .replay { position: absolute; color: #000; font: 12px/15px "Liberation Sans", Arial, sans-serif; z-index: 2; }
.combo { display: flex; height: 22px; background: #fff; border: 1px solid; border-color: #696969 #fff #fff #696969; box-shadow: inset 1px 1px #a0a0a0; padding: 1px; }
.combo select { flex: 1; min-width: 0; appearance: none; border: 0; background: transparent; padding-left: 3px; outline: 0; opacity: 1; overflow: hidden; }
.drop { flex: none; width: 16px; background: #f0f0f0; border: 1px solid; border-color: #fff #696969 #696969 #fff; display: grid; place-items: center; }
.drop::after { content: ""; border: 4px solid transparent; border-top-color: #000; border-bottom: 0; }
.off .drop::after { border-top-color: #a0a0a0; }
.trade button, .unit button, .go button, .spin button { border: 1px solid; border-color: #fff #696969 #696969 #fff; box-shadow: inset -1px -1px #a0a0a0; background: #f0f0f0; white-space: pre; text-align: center; }
input[type="checkbox"] { appearance: none; flex: none; width: 13px; height: 13px; background: #fff; border: 1px solid; border-color: #696969 #fff #fff #696969; display: grid; place-items: center; }
input[type="checkbox"]:checked::after { content: ""; width: 4px; height: 7px; border: solid #000; border-width: 0 2px 2px 0; transform: rotate(40deg); margin-top: -2px; }
input[type="checkbox"]:disabled::after { border-color: #909090; }
.trade { left: 16px; top: 77px; width: 228px; background: #b4b4b4; border: 2px solid #e4e4e4; border-top: 0; border-radius: 5px 5px 3px 3px; box-shadow: 0 0 0 1px #777; display: flex; flex-direction: column; }
.trade header { height: 31px; display: flex; align-items: center; justify-content: space-between; background: #f3f3f3; margin: 0 -2px; padding: 0 2px 0 9px; border-radius: 5px 5px 0 0; }
h3 { font: 12px/16px "Open Sans", "Noto Sans", sans-serif; color: #999; }
.trade h3 { overflow: hidden; flex: 1; font-size: 11px; }
.trade header button { width: 19px; height: 19px; border: 0; background: #d9d9d9; color: #fff; box-shadow: none; line-height: 16px; }
.trade > .combo { margin-right: 1px; margin-left: 1px; }
.match { background: #00a000; height: 19px; margin: 4px 3px 5px 0; padding-left: 1px; line-height: 18px; border: 1px solid; border-color: #696969 #f0f0f0 #f0f0f0 #696969; }
.tabs { display: flex; background: #f0f0f0; height: 22px; align-items: flex-end; padding-left: 1px; }
.trade .tabs button { background: none; border-width: 0 2px 0 1px; border-color: #696969; border-left-color: #fff; box-shadow: none; height: 19px; padding: 0 4px; margin-right: 2px; }
.trade .tabs .on { height: 22px; padding: 0 7px; margin-right: 0; }
.page { border: solid #f0f0f0; border-width: 0 4px; border-bottom-width: 4px; padding: 10px 2px 4px; }
.position { display: flex; justify-content: space-between; padding: 0 3px 0 7px; }
.fields { width: 117px; display: flex; flex-direction: column; }
.fields label { height: 18px; line-height: 20px; }
.fields input { height: 18px; margin-bottom: 7px; border: 1px solid; border-color: #696969 #fff #fff #696969; background: #fff; padding-left: 1px; width: 100%; }
.fields .green { background: #80ff80; }
.fields .pink { background: #ff8080; }
.orders { display: grid; grid-template-columns: 39px 39px; gap: 1px 6px; grid-auto-rows: 38px; }
.trade .orders button, .trade .send button { background: #a8a8a8; font-weight: 700; font-size: 11px; line-height: 14px; }
.orders span { padding: 0 1px; }
.buy span { background: #80ff80; }
.sell span { background: #ff8080; }
.trade .buy.full { background: #80ff80; }
.trade .sell.full { background: #ff8080; }
.actions { display: flex; justify-content: space-between; margin-top: 5px; }
.trade .actions button { height: 30px; background: #ff8040; font-weight: 700; font-size: 11px; }
.actions .w1, .actions .w2 { width: 66px; }
.actions .w3 { width: 58px; }
.trade .actions .m { width: 19px; background: #f0f0f0; }
.qty { display: flex; margin: 8px 1px 0 2px; }
.trade .qty button { flex: 1; height: 25px; background: #e0e000; }
.trade .qty .on { background: #c8c8c8; border-color: #696969 #fff #fff #696969; box-shadow: none; }
.attach { display: flex; justify-content: space-between; align-items: flex-end; margin: 4px 0 0 9px; }
.attach label { display: flex; align-items: center; gap: 5px; height: 18px; }
.attach button { width: 40px; height: 26px; }
fieldset { margin: 0; min-width: 0; padding: 0; }
.ticket { border: 1px solid #fff; box-shadow: inset 0 0 0 1px #a0a0a0; margin: 4px 0 0 2px; padding: 6px 3px 3px; display: flex; flex-direction: column; gap: 3px; }
.off { width: 124px; align-self: flex-end; background: #b0b0b0; }
.pair { display: flex; justify-content: flex-end; align-items: center; gap: 4px; }
.pair .combo { width: 124px; }
.gtd { height: 24px; width: 100%; background: #b0b0b0; border: 1px solid; border-color: #696969 #fff #fff #696969; padding-left: 3px; color: #666; }
.send { display: flex; justify-content: space-between; padding: 0 33px 0 43px; }
.send button { width: 39px; height: 37px; }

.replay { left: 5px; top: 654px; width: 557px; height: 227px; background: #f0f0f0; border-radius: 7px; box-shadow: 0 0 0 1px #999; padding: 0 11px 8px 7px; font-size: 13px; line-height: 16px; display: flex; flex-direction: column; overflow: hidden; }
.replay header { height: 30px; flex: none; display: flex; justify-content: space-between; align-items: center; background: #f3f3f3; margin: 0 -11px 0 -7px; padding: 0 10px 0 8px; }
.replay header button { border: 0; background: none; width: 11px; height: 11px; display: grid; }
.sources { display: flex; gap: 9px; padding: 9px 7px 0 0; }
.sources > div { flex: 1; min-width: 0; }
.sources label { display: block; height: 18px; }
.start { display: flex; justify-content: space-between; align-items: center; height: 24px; margin: 5px 7px 0 10px; }
.start label { display: flex; align-items: center; gap: 4px; }
.start input:not([type]) { width: 79px; height: 23px; background: #f0f0f0; border: 1px solid; border-color: #696969 #fff #fff #696969; padding-left: 2px; color: #707070; }
.muted { color: #a0a0a0; }
.muted input { background: #f0f0f0; }
.lower { display: flex; justify-content: space-between; margin-top: 5px; }
.jump { position: relative; width: 307px; height: 105px; border: 1px solid #a0a0a0; padding: 0 10px 0 8px; display: flex; justify-content: space-between; }
legend { padding: 0 2px; margin-left: 0; height: 16px; }
.method { width: 175px; margin-top: -1px; }
.method label { display: block; height: 19px; }
.list { height: 63px; display: flex; background: #fff; border: 1px solid; border-color: #696969 #fff #fff #696969; padding: 2px 0; }
.list select { appearance: none; border: 0; background: #fff; flex: 1; min-width: 0; overflow: hidden; outline: 0; padding: 0; }
.list option { height: 16px; line-height: 16px; min-height: 0; padding: 0 0 0 3px; overflow: hidden; white-space: nowrap; }
.list .sel { background: #0078d7; color: #fff; }
.thumb { width: 17px; background: #f0f0f0; margin: -1px 0; display: grid; place-items: center; }
.thumb::after { content: ""; width: 2px; height: 20px; margin-top: 10px; background: #888; }
.unit { width: 105px; }
.unit label { display: block; height: 21px; padding-left: 4px; }
.unit input { width: 100%; height: 27px; border: 1px solid; border-color: #696969 #fff #fff #696969; background: #fff; padding: 0 0 5px 2px; }
.unit div { display: flex; justify-content: space-between; margin-top: 4px; }
.unit button { width: 30px; height: 28px; }
.middle { width: 148px; margin-left: 14px; }
.speed { width: 148px; height: 47px; border: 1px solid #a0a0a0; padding: 0 7px; display: flex; margin-bottom: 6px; }
.speed .combo { width: 101px; height: 24px; }
.spin { display: flex; flex-direction: column; }
.spin button { width: 16px; height: 12px; display: grid; place-items: center; }
.spin button::after { content: ""; border: 3px solid transparent; border-top-color: #000; border-bottom: 0; }
.spin .up::after { border: 3px solid transparent; border-bottom-color: #000; border-top: 0; }
.middle label { display: flex; align-items: center; gap: 6px; height: 18px; margin-bottom: 6px; }
.go { width: 60px; display: flex; flex-direction: column; gap: 18px; margin: 11px 0 0 9px; }
.go button { height: 28px; }

.taskbar { grid-area: 8 / 1 / 9 / -1; align-self: end; height: 4px; border-top: 1px solid #b8b8b8; background: #444; display: flex; gap: 1px; }
.taskbar i { background: #e6e6e6; width: 74px; }
.taskbar i:first-child { background: #0078d7; width: 65px; }
.taskbar i:last-child { width: 180px; }
.stub { position: absolute; left: 795px; bottom: 0; width: 144px; height: 13px; background: #f0f0f0; border-radius: 6px 6px 0 0; box-shadow: 0 0 0 1px #888; padding-left: 8px; }
.stub svg { display: block; width: 128px; height: 13px; }
</style>
